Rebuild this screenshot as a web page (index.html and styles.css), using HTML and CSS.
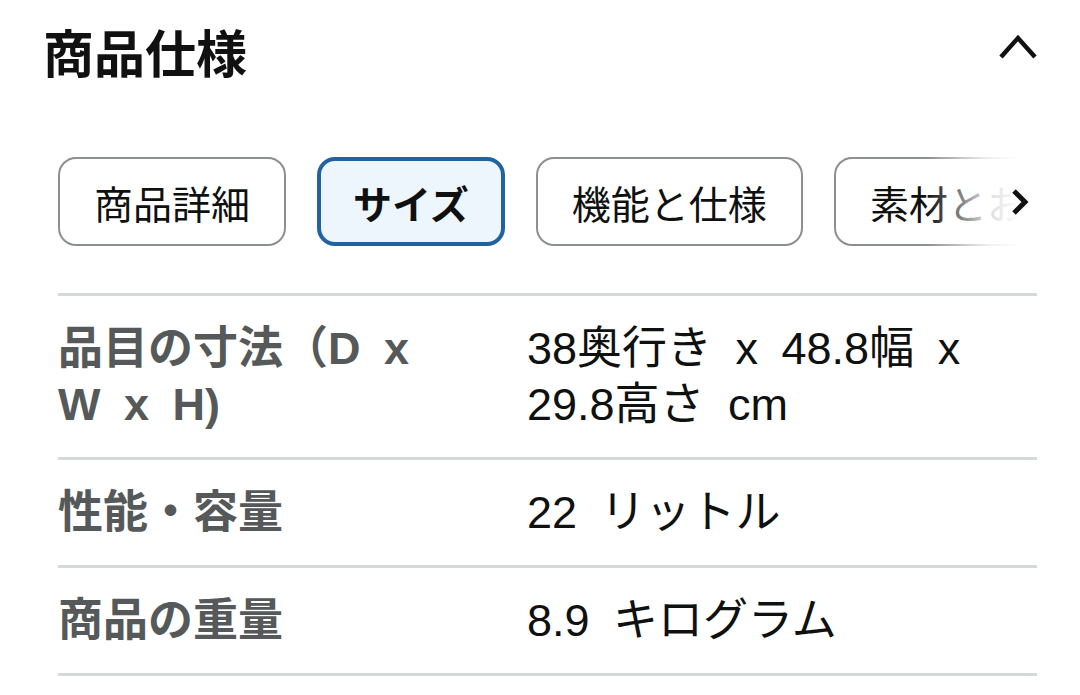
FILE: index.html
```html
<!DOCTYPE html>
<html lang="ja">
<head>
<meta charset="utf-8">
<link rel="stylesheet" href="styles.css">
</head>
<body>
<div class="page">
  <div class="header">
    <h2 class="title">商品仕様</h2>
    <svg class="chev-up" width="40" height="28" viewBox="0 0 40 28"><path d="M3 25 L20 6 L37 25" fill="none" stroke="#111" stroke-width="4.5"/></svg>
  </div>
  <div class="tabs-wrap">
    <div class="tabs">
      <div class="tab">商品詳細</div>
      <div class="tab active">サイズ</div>
      <div class="tab">機能と仕様</div>
      <div class="tab">素材とお手入れ</div>
    </div>
    <div class="fade">
      <svg class="chev-right" width="20" height="28" viewBox="0 0 20 28"><path d="M4 3 L15 14 L4 25" fill="none" stroke="#111" stroke-width="5"/></svg>
    </div>
  </div>
  <div class="specs">
    <div class="row">
      <div class="label">品目の寸法（D x W x H)</div>
      <div class="value">38奥行き x 48.8幅 x 29.8高さ cm</div>
    </div>
    <div class="row">
      <div class="label">性能・容量</div>
      <div class="value">22 リットル</div>
    </div>
    <div class="row">
      <div class="label">商品の重量</div>
      <div class="value">8.9 キログラム</div>
    </div>
  </div>
</div>
</body>
</html>
```
FILE: styles.css
```css
html, body {
  margin: 0;
  padding: 0;
  background: #fff;
}
body {
  font-family: "Liberation Sans", "Noto Sans CJK JP", sans-serif;
  color: #0f1111;
}
.page {
  padding: 0 43px 0 58px;
}
.header {
  display: flex;
  justify-content: space-between;
  align-items: center;
  margin-left: -15px;
  padding-top: 22px;
  height: 58px;
}
.title {
  margin: 0;
  font-family: "Noto Sans CJK JP", sans-serif;
  font-size: 51px;
  font-weight: 700;
  line-height: 58px;
  color: #111;
}
.chev-up {
  margin-right: -1px;
  margin-top: -10px;
}
.tabs-wrap {
  position: relative;
  margin-top: 77px;
  overflow: hidden;
}
.tabs {
  display: flex;
  gap: 31px;
  white-space: nowrap;
}
.tab {
  flex: none;
  box-sizing: border-box;
  height: 89px;
  display: flex;
  align-items: center;
  padding: 0 34px;
  border: 2px solid #8d9090;
  border-radius: 18px;
  font-family: "Noto Sans CJK JP", sans-serif;
  font-size: 39px;
  color: #0f1111;
  background: #fff;
}
.tab.active {
  border: 4px solid #2162a1;
  background: #edf6fd;
  padding: 0 32px;
  font-weight: 700;
}
.fade {
  position: absolute;
  top: 0;
  right: 0;
  width: 110px;
  height: 89px;
  background: linear-gradient(to right, rgba(255,255,255,0) 0%, rgba(255,255,255,0.85) 55%, #fff 85%);
  display: flex;
  align-items: center;
  justify-content: flex-end;
}
.chev-right {
  margin-right: 7px;
}
.specs {
  margin-top: 47px;
  border-top: 3px solid #d5d9d9;
}
.row {
  display: grid;
  grid-template-columns: 469px 1fr;
  padding: 25px 0 24px;
  border-bottom: 3px solid #d5d9d9;
  font-size: 45px;
  line-height: 56px;
  word-spacing: 11px;
}
.label {
  font-weight: 700;
  color: #565959;
  padding-right: 85px;
}
.value {
  color: #0f1111;
}
```
